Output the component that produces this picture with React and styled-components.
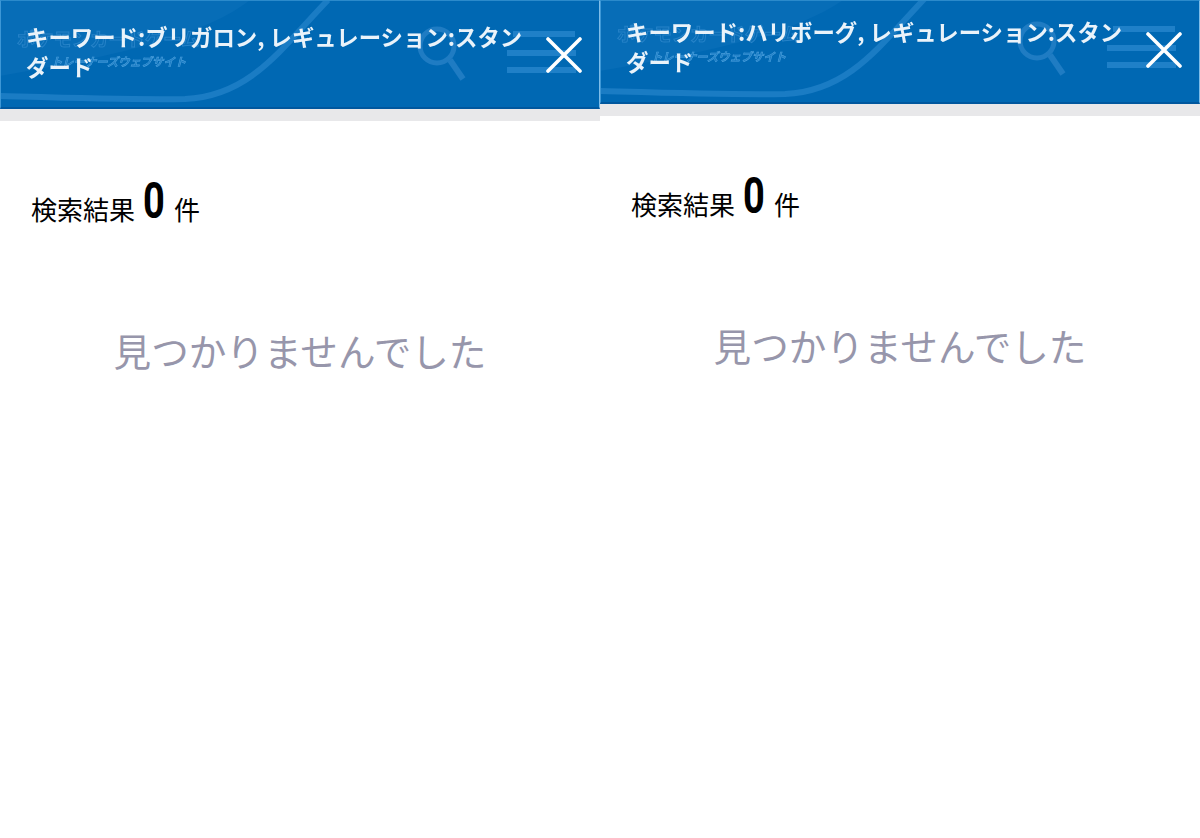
import styled, { createGlobalStyle } from "styled-components";

const GlobalStyle = createGlobalStyle`
  html, body {
    margin: 0;
    padding: 0;
    background: #fff;
  }
  body {
    font-family: "Liberation Sans", "Noto Sans CJK JP", sans-serif;
  }
`;

const Page = styled.div`
  width: 1200px;
  height: 838px;
  display: grid;
  grid-template-columns: 600px 600px;
  overflow: hidden;
  background: #fff;
`;

const Pane = styled.section`
  display: flex;
  flex-direction: column;
  min-width: 0;
`;

const Header = styled.header`
  position: relative;
  box-sizing: border-box;
  height: ${(p) => p.$height}px;
  background: #0068b3;
  border-top: 1px solid #2b8acb;
  border-left: 1px solid #3d97d6;
  border-right: 1px solid #7fbde8;
  border-bottom: 2px solid #00579e;
  overflow: hidden;
`;

const Decor = styled.svg`
  position: absolute;
  left: -1px;
  top: -1px;
  width: 600px;
  height: 110px;
`;

const GhostLogo = styled.div`
  position: absolute;
  left: 16px;
  top: ${(p) => p.$top}px;
  font-family: "Noto Sans CJK JP", sans-serif;
  font-weight: 700;
  filter: blur(0.6px);
  white-space: nowrap;
`;

const GhostTop = styled.div`
  color: #0a6db6;
  -webkit-text-stroke: 1px #2683c8;
  font-size: 18.3px;
  line-height: 24px;
`;

const GhostBottom = styled.div`
  margin: 4px 0 0 34px;
  color: #1a7cc4;
  -webkit-text-stroke: 0.6px #4a9fdc;
  font-size: 11.3px;
  font-style: italic;
  line-height: 14px;
`;

const Keyword = styled.h2`
  position: relative;
  box-sizing: border-box;
  width: 535px;
  margin: 0;
  padding: ${(p) => p.$top}px 0 0 25px;
  color: #eaf3fa;
  font-family: "Noto Sans CJK JP", sans-serif;
  font-size: 22.4px;
  font-weight: 700;
  line-height: 30px;
  filter: blur(0.3px);
`;

const Close = styled.svg`
  position: absolute;
  right: 17px;
  top: ${(p) => p.$top}px;
  width: 36px;
  height: 36px;
`;

const Band = styled.div`
  height: 12px;
  background: #e8e8ea;
`;

const Count = styled.div`
  display: flex;
  align-items: baseline;
  height: 48px;
  margin-top: 58px;
  padding-left: 31px;
  color: #000;
  font-family: "Noto Sans CJK JP", sans-serif;
  font-size: 26px;
  line-height: 48px;
`;

const Zero = styled.span`
  display: inline-block;
  width: 20px;
  margin: 0 11px 0 8px;
  font-family: Roboto, sans-serif;
  font-size: 50px;
  font-weight: 700;
  color: #000;
  transform: translateY(-2px) scaleX(0.76);
  transform-origin: left center;
`;

const Empty = styled.p`
  margin: 96px 0 0;
  color: #9796ab;
  font-family: "Noto Sans CJK JP", sans-serif;
  font-size: 37.6px;
  font-weight: 400;
  line-height: 54px;
  text-align: center;
`;

const panes = [
  { name: "ブリガロン", height: 109, textTop: 20, closeTop: 36, ghostTop: 25 },
  { name: "ハリボーグ", height: 104, textTop: 15, closeTop: 31, ghostTop: 20 },
];

function ResultPane({ name, height, textTop, closeTop, ghostTop }) {
  // decoration is shifted up with the shorter header
  const shift = height === 109 ? 0 : -5;
  return (
    <Pane>
      <Header $height={height}>
        <Decor viewBox="0 0 600 110">
          <g transform={`translate(0 ${shift})`}>
            <path d="M0 76 C90 60 200 40 250 0 L0 0 Z" fill="#076db7" />
            <path
              d="M0 96 C70 98 130 100 185 99 C250 96 280 50 328 0"
              fill="none"
              stroke="#1a7cc4"
              strokeWidth="6"
            />
            <circle cx="437" cy="46" r="17" fill="none" stroke="#1f7cc3" strokeWidth="5" />
            <path d="M450 60 L463 79" stroke="#1f7cc3" strokeWidth="6" />
            <rect x="513" y="31" width="62" height="6" fill="#1f80c8" />
            <rect x="507" y="50" width="69" height="6" fill="#1f80c8" />
            <rect x="507" y="67" width="69" height="6" fill="#1f80c8" />
          </g>
        </Decor>
        <GhostLogo $top={ghostTop}>
          <GhostTop>ポケモンカードゲーム</GhostTop>
          <GhostBottom>トレーナーズウェブサイト</GhostBottom>
        </GhostLogo>
        <Keyword $top={textTop}>
          キーワード:{name}, レギュレーション:スタンダード
        </Keyword>
        <Close $top={closeTop} viewBox="0 0 36 36">
          <path d="M2 2 L34 34 M34 2 L2 34" stroke="#fff" strokeWidth="3.6" strokeLinecap="round" />
        </Close>
      </Header>
      <Band />
      <Count>
        検索結果<Zero>0</Zero>件
      </Count>
      <Empty>見つかりませんでした</Empty>
    </Pane>
  );
}

export default function App() {
  return (
    <Page>
      <GlobalStyle />
      {panes.map((pane) => (
        <ResultPane key={pane.name} {...pane} />
      ))}
    </Page>
  );
}
